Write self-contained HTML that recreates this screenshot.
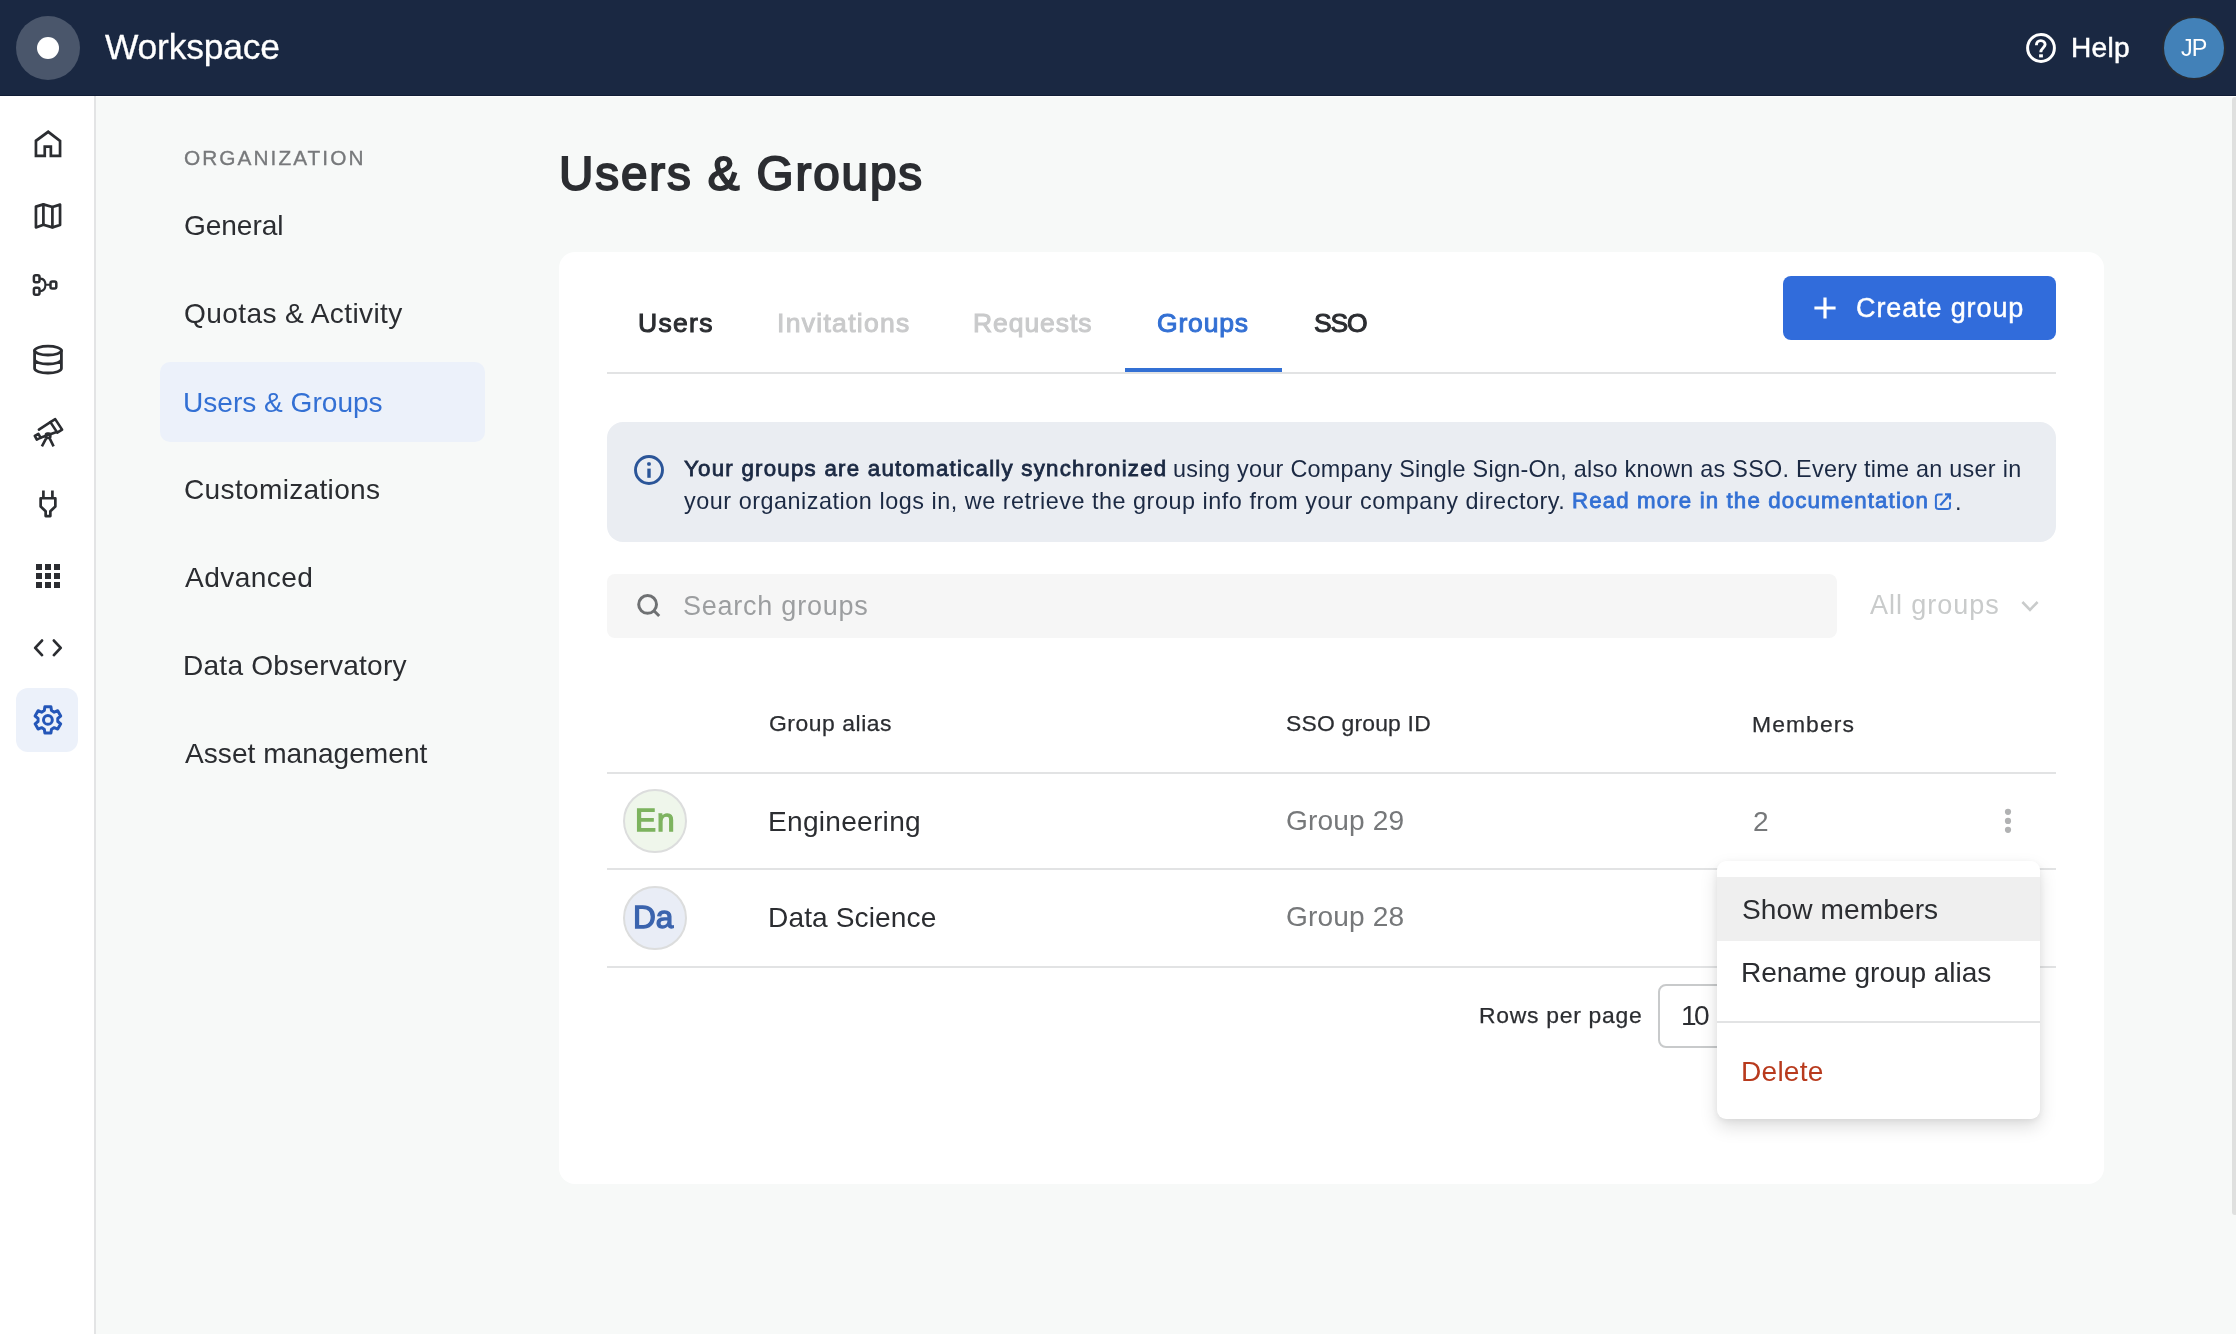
<!DOCTYPE html>
<html><head><meta charset="utf-8"><title>Users &amp; Groups</title>
<style>
*{box-sizing:border-box;margin:0;padding:0}
html,body{width:2236px;height:1334px;overflow:hidden;background:#f7f9f8;font-family:"Liberation Sans",sans-serif}
.abs{position:absolute}
.tx{position:absolute;white-space:nowrap;line-height:1;will-change:transform}
</style></head><body>

<div class="abs" style="left:0;top:0;width:2236px;height:96px;background:#1a2842"></div>
<div class="abs" style="left:0;top:95px;width:2236px;height:1px;background:#111d36"></div>
<div class="abs" style="left:0;top:96px;width:2236px;height:1px;background:#ffffff"></div>
<div class="abs" style="left:16px;top:16px;width:64px;height:64px;border-radius:50%;background:#4a566b"></div>
<div class="abs" style="left:37px;top:37px;width:22px;height:22px;border-radius:50%;background:#fff"></div>
<svg class="abs" style="left:2020px;top:26px" width="44" height="44" viewBox="0 0 44 44" fill="none" stroke="#fff" stroke-width="3">
 <circle cx="21" cy="22" r="13.4"/>
 <path d="M16.4,19.2 C16.4,16.4 18.3,14.6 20.8,14.6 C23.3,14.6 25.1,16.4 25.1,18.6 C25.1,21.4 20.8,22.2 20.8,26.2" stroke-width="2.9"/>
 <rect x="19.1" y="28.3" width="3.8" height="3.1" fill="#fff" stroke="none"/>
</svg>
<div class="abs" style="left:2162.4px;top:16.4px;width:63.2px;height:63.2px;border-radius:50%;background:#252b36"></div>
<div class="abs" style="left:2164px;top:18px;width:60px;height:60px;border-radius:50%;background:#4281b8"></div>
<div class="abs" style="left:0;top:96px;width:96px;height:1238px;background:#fff"></div>
<div class="abs" style="left:94px;top:96px;width:2px;height:1238px;background:#e3e4e5"></div>
<div class="abs" style="left:16px;top:688px;width:62px;height:64px;border-radius:12px;background:#ecf1fa"></div>
<div class="abs" style="left:160px;top:362px;width:325px;height:80px;border-radius:10px;background:#ecf1fa"></div>
<div class="abs" style="left:559px;top:252px;width:1545px;height:932px;background:#fff;border-radius:16px"></div>
<div class="abs" style="left:607px;top:372px;width:1449px;height:2px;background:#e2e3e4"></div>
<div class="abs" style="left:1125px;top:368px;width:157px;height:4px;background:#3370d4"></div>
<div class="abs" style="left:1783px;top:276px;width:273px;height:64px;border-radius:8px;background:#316cdb"></div>
<svg class="abs" style="left:1800px;top:290px" width="50" height="40" viewBox="0 0 50 40" stroke="#fff" stroke-width="3.2" fill="none">
 <path d="M14.4,18 H35.6 M25,7.6 V28.6"/>
</svg>
<div class="abs" style="left:607px;top:422px;width:1449px;height:120px;border-radius:16px;background:#eaedf2"></div>
<svg class="abs" style="left:620px;top:440px" width="60" height="60" viewBox="0 0 60 60" fill="none" stroke="#2b5598" stroke-width="2.9">
 <circle cx="29" cy="30" r="13.5"/>
 <path d="M29,28.6 V37.8" stroke-width="3.4"/>
 <rect x="27.2" y="22.2" width="3.6" height="3.6" rx="1.2" fill="#2b5598" stroke="none"/>
</svg>
<svg class="abs" style="left:1920px;top:480px" width="40" height="40" viewBox="0 0 40 40" fill="none" stroke="#3370d4" stroke-width="2">
 <path d="M22.6,14.4 H18.4 Q15.9,14.4 15.9,16.9 V26.5 Q15.9,29 18.4,29 H27.5 Q30,29 30,26.5 V22.2"/>
 <path d="M20.3,25.2 L29.6,14.8 M25,14.4 H30 V19.4" stroke-width="2.1"/>
</svg>
<div class="abs" style="left:607px;top:574px;width:1230px;height:64px;border-radius:8px;background:#f6f6f6"></div>
<svg class="abs" style="left:620px;top:580px" width="60" height="50" viewBox="0 0 60 50" fill="none" stroke="#6f7173" stroke-width="3">
 <circle cx="27.6" cy="24.4" r="8.9"/>
 <path d="M34.2,31 L39.2,36"/>
</svg>
<svg class="abs" style="left:2010px;top:590px" width="40" height="30" viewBox="0 0 40 30" fill="none" stroke="#c9cbcb" stroke-width="2.6">
 <path d="M12.4,12 L20,19.8 L27.6,12"/>
</svg>
<div class="abs" style="left:607px;top:772px;width:1449px;height:2px;background:#e2e3e4"></div>
<div class="abs" style="left:607px;top:868px;width:1449px;height:2px;background:#e2e3e4"></div>
<div class="abs" style="left:607px;top:966px;width:1449px;height:2px;background:#e2e3e4"></div>
<div class="abs" style="left:623px;top:789px;width:64px;height:64px;border-radius:50%;background:#eff6eb;border:2px solid #dcdddd"></div>
<div class="abs" style="left:623px;top:886px;width:64px;height:64px;border-radius:50%;background:#e9edf6;border:2px solid #dcdddd"></div>
<svg class="abs" style="left:1990px;top:800px" width="36" height="40" viewBox="0 0 36 40" fill="#b1b2b3">
 <circle cx="18" cy="11.8" r="3.1"/><circle cx="18" cy="20.9" r="3.1"/><circle cx="18" cy="29.8" r="3.1"/>
</svg>
<div class="abs" style="left:1658px;top:984px;width:200px;height:64px;border-radius:8px;border:2px solid #c8cacb;background:#fff"></div>
<div class="abs" style="left:1717px;top:861px;width:323px;height:258px;background:#fff;border-radius:9px;box-shadow:0 8px 18px rgba(0,0,0,0.13),0 2px 6px rgba(0,0,0,0.06)"></div>
<div class="abs" style="left:1717px;top:877px;width:323px;height:64px;background:#efefef"></div>
<div class="abs" style="left:1717px;top:1021px;width:323px;height:2px;background:#e2e3e4"></div>
<div class="abs" style="left:2232px;top:97px;width:6px;height:1118px;background:#dfe0df;border-radius:5px"></div>


<svg class="abs" style="left:0;top:0" width="96" height="800" viewBox="0 0 96 800" fill="none" stroke="#2b2d31" stroke-width="2.7" stroke-linejoin="round" stroke-linecap="round">
 <path d="M35.95,155.85 V140.8 L48.2,131.8 L60.05,140.8 V155.85 H50.85 V146.55 H44.75 V155.85 Z" stroke-linejoin="miter"/>
 <path d="M35.95,206.6 L43.4,204.4 L52.4,207 L60.05,204.6 V225 L52.4,227.4 L43.4,224.8 L35.95,227.4 Z"/>
 <path d="M43.4,204.6 V224.6 M52.4,207 V227.2"/>
 <g stroke-width="2.5">
  <rect x="33.9" y="275.3" width="5.6" height="7" rx="1.8"/>
  <rect x="33.9" y="287.8" width="5.6" height="7" rx="1.8"/>
  <rect x="50.5" y="281.5" width="5.8" height="7" rx="1.8"/>
  <path d="M40.5,278.6 C44.5,278.8 45.4,281 45.4,284.8 C45.4,288.6 44.5,290.8 40.5,291.2 M45.4,284.8 H50" stroke-width="2.1"/>
 </g>
 <g stroke-width="2.8">
  <ellipse cx="48" cy="350.6" rx="13.4" ry="4.4"/>
  <path d="M34.6,350.6 V368.6 A13.4,4.4 0 0 0 61.4,368.6 V350.6 M34.6,359.6 A13.4,4.4 0 0 0 61.4,359.6"/>
 </g>
 <g stroke-width="2.6">
  <path d="M55.2,419.1 L62.1,429.6 L57.3,432.6 L50.4,422.1 Z"/>
  <path d="M50.4,422.1 L38.9,429.6 M56.6,432.1 L40.4,437.8"/>
  <path d="M34.8,435.9 L38.4,433.8 L40.6,437.6 L36.8,439.6 Z"/>
  <path d="M46,438.6 L41.9,446.4 M49.8,438.6 L53.6,446.4" stroke-linecap="butt"/>
  <rect x="45.9" y="433.6" width="4.4" height="4.4" rx="1.4"/>
 </g>
 <path d="M43.4,490.6 V498 M52.4,490.6 V498" stroke-linecap="butt"/>
 <path d="M40.65,498.25 H55.35 V506.6 L50.35,511.2 V516.05 H45.65 V511.2 L40.65,506.6 Z"/>
 <g fill="#2b2d31" stroke="none">
  <rect x="36" y="564" width="6" height="6"/><rect x="45" y="564" width="6" height="6"/><rect x="54" y="564" width="6" height="6"/>
  <rect x="36" y="573" width="6" height="6"/><rect x="45" y="573" width="6" height="6"/><rect x="54" y="573" width="6" height="6"/>
  <rect x="36" y="582" width="6" height="6"/><rect x="45" y="582" width="6" height="6"/><rect x="54" y="582" width="6" height="6"/>
 </g>
 <path d="M42,640.6 L35.2,647.9 L42,655.1 M53.9,640.6 L60.7,647.9 L53.9,655.1" stroke-width="2.8"/>
 <g stroke="#2456b8" stroke-width="3">
  <path d="M44.32,710.56 L44.89,706.84 L50.91,706.84 L51.48,710.56 L54.19,712.13 L57.70,710.76 L60.71,715.98 L57.78,718.34 L57.78,721.46 L60.71,723.82 L57.70,729.04 L54.19,727.67 L51.48,729.24 L50.91,732.96 L44.89,732.96 L44.32,729.24 L41.61,727.67 L38.10,729.04 L35.09,723.82 L38.02,721.46 L38.02,718.34 L35.09,715.98 L38.10,710.76 L41.61,712.13 Z"/>
  <circle cx="47.9" cy="719.9" r="4.4"/>
 </g>
</svg>
<div class="tx" style="left:104.50px;top:29.90px;font-size:35.4px;font-weight:normal;letter-spacing:-0.188px;color:#ffffff;-webkit-text-stroke:0.3px #ffffff;">Workspace</div>
<div class="tx" style="left:2071.00px;top:34.25px;font-size:28.1px;font-weight:normal;letter-spacing:0.300px;color:#ffffff;-webkit-text-stroke:0.5px #ffffff;">Help</div>
<div class="tx" style="left:2181.20px;top:36.67px;font-size:23.4px;font-weight:normal;letter-spacing:-0.900px;color:#ffffff;">JP</div>
<div class="tx" style="left:183.50px;top:148.30px;font-size:20.8px;font-weight:normal;letter-spacing:2.064px;color:#77797b;-webkit-text-stroke:0.35px #77797b;">ORGANIZATION</div>
<div class="tx" style="left:183.80px;top:212.45px;font-size:28.1px;font-weight:normal;letter-spacing:-0.083px;color:#2b2d31;">General</div>
<div class="tx" style="left:183.80px;top:299.65px;font-size:28.1px;font-weight:normal;letter-spacing:0.369px;color:#2b2d31;">Quotas &amp; Activity</div>
<div class="tx" style="left:182.70px;top:388.85px;font-size:28.1px;font-weight:normal;letter-spacing:-0.015px;color:#3370d4;">Users &amp; Groups</div>
<div class="tx" style="left:183.50px;top:476.05px;font-size:28.1px;font-weight:normal;letter-spacing:0.308px;color:#2b2d31;">Customizations</div>
<div class="tx" style="left:184.50px;top:564.05px;font-size:28.1px;font-weight:normal;letter-spacing:0.429px;color:#2b2d31;">Advanced</div>
<div class="tx" style="left:182.90px;top:652.25px;font-size:28.1px;font-weight:normal;letter-spacing:0.227px;color:#2b2d31;">Data Observatory</div>
<div class="tx" style="left:184.50px;top:739.75px;font-size:28.1px;font-weight:normal;letter-spacing:0.020px;color:#2b2d31;">Asset management</div>
<div class="tx" style="left:559.10px;top:149.85px;font-size:47.6px;font-weight:normal;letter-spacing:1.892px;color:#2b2d31;-webkit-text-stroke:1.9px #2b2d31;">Users &amp; Groups</div>
<div class="tx" style="left:638.30px;top:310.48px;font-size:26.5px;font-weight:normal;letter-spacing:1.300px;color:#2b2d31;-webkit-text-stroke:1.0px #2b2d31;">Users</div>
<div class="tx" style="left:777.40px;top:310.48px;font-size:26.5px;font-weight:normal;letter-spacing:1.300px;color:#c9cacb;-webkit-text-stroke:1.0px #c9cacb;">Invitations</div>
<div class="tx" style="left:972.90px;top:309.87px;font-size:26.5px;font-weight:normal;letter-spacing:0.929px;color:#c9cacb;-webkit-text-stroke:1.0px #c9cacb;">Requests</div>
<div class="tx" style="left:1156.70px;top:310.48px;font-size:26.5px;font-weight:normal;letter-spacing:0.820px;color:#3370d4;-webkit-text-stroke:1.0px #3370d4;">Groups</div>
<div class="tx" style="left:1313.50px;top:310.48px;font-size:26.5px;font-weight:normal;letter-spacing:-1.200px;color:#2b2d31;-webkit-text-stroke:1.0px #2b2d31;">SSO</div>
<div class="tx" style="left:1856.00px;top:294.70px;font-size:27.0px;font-weight:normal;letter-spacing:0.882px;color:#ffffff;-webkit-text-stroke:0.45px #ffffff;">Create group</div>
<div class="tx" style="left:683.50px;top:458.28px;font-size:22.3px;font-weight:normal;letter-spacing:1.232px;color:#1b2943;-webkit-text-stroke:0.8px #1b2943;">Your groups are automatically synchronized</div>
<div class="tx" style="left:1172.90px;top:458.28px;font-size:23.4px;font-weight:normal;letter-spacing:0.270px;color:#1b2943;">using your Company Single Sign-On, also known as SSO. Every time an user in</div>
<div class="tx" style="left:683.50px;top:489.67px;font-size:23.4px;font-weight:normal;letter-spacing:0.526px;color:#1b2943;">your organization logs in, we retrieve the group info from your company directory.</div>
<div class="tx" style="left:1572.10px;top:489.67px;font-size:22.3px;font-weight:normal;letter-spacing:1.117px;color:#3370d4;-webkit-text-stroke:0.8px #3370d4;">Read more in the documentation</div>
<div class="tx" style="left:683.40px;top:592.60px;font-size:27.0px;font-weight:normal;letter-spacing:0.758px;color:#9c9ea0;">Search groups</div>
<div class="tx" style="left:1869.90px;top:592.30px;font-size:27.0px;font-weight:normal;letter-spacing:0.956px;color:#c9cbcb;">All groups</div>
<div class="tx" style="left:769.20px;top:712.40px;font-size:22.9px;font-weight:normal;letter-spacing:0.550px;color:#2b2d31;-webkit-text-stroke:0.25px #2b2d31;">Group alias</div>
<div class="tx" style="left:1286.00px;top:712.40px;font-size:22.9px;font-weight:normal;letter-spacing:0.200px;color:#2b2d31;-webkit-text-stroke:0.25px #2b2d31;">SSO group ID</div>
<div class="tx" style="left:1752.00px;top:713.10px;font-size:22.9px;font-weight:normal;letter-spacing:1.083px;color:#2b2d31;-webkit-text-stroke:0.25px #2b2d31;">Members</div>
<div class="tx" style="left:635.10px;top:804.80px;font-size:31.6px;font-weight:normal;letter-spacing:1.000px;color:#7db35f;-webkit-text-stroke:1.3px #7db35f;">En</div>
<div class="tx" style="left:767.90px;top:808.05px;font-size:28.1px;font-weight:normal;letter-spacing:0.270px;color:#2b2d31;">Engineering</div>
<div class="tx" style="left:1286.30px;top:806.65px;font-size:28.1px;font-weight:normal;letter-spacing:0.157px;color:#76787a;">Group 29</div>
<div class="tx" style="left:1753.30px;top:807.65px;font-size:28.1px;font-weight:normal;letter-spacing:0.000px;color:#76787a;">2</div>
<div class="tx" style="left:632.50px;top:902.10px;font-size:31.6px;font-weight:normal;letter-spacing:-0.100px;color:#3b64ae;-webkit-text-stroke:1.3px #3b64ae;">Da</div>
<div class="tx" style="left:767.90px;top:904.25px;font-size:28.1px;font-weight:normal;letter-spacing:0.109px;color:#2b2d31;">Data Science</div>
<div class="tx" style="left:1286.30px;top:903.35px;font-size:28.1px;font-weight:normal;letter-spacing:0.157px;color:#76787a;">Group 28</div>
<div class="tx" style="left:1479.30px;top:1004.30px;font-size:22.9px;font-weight:normal;letter-spacing:0.725px;color:#2b2d31;-webkit-text-stroke:0.25px #2b2d31;">Rows per page</div>
<div class="tx" style="left:1681.20px;top:1002.05px;font-size:28.1px;font-weight:normal;letter-spacing:-2.700px;color:#2b2d31;">10</div>
<div class="tx" style="left:1742.20px;top:895.75px;font-size:28.1px;font-weight:normal;letter-spacing:0.091px;color:#2b2d31;">Show members</div>
<div class="tx" style="left:1741.20px;top:959.45px;font-size:28.1px;font-weight:normal;letter-spacing:-0.065px;color:#2b2d31;">Rename group alias</div>
<div class="tx" style="left:1741.20px;top:1057.65px;font-size:28.1px;font-weight:normal;letter-spacing:0.240px;color:#b83a1d;">Delete</div>
<div class="tx" style="left:1954.8px;top:491.2px;font-size:23.4px;color:#1b2943">.</div>
</body></html>
